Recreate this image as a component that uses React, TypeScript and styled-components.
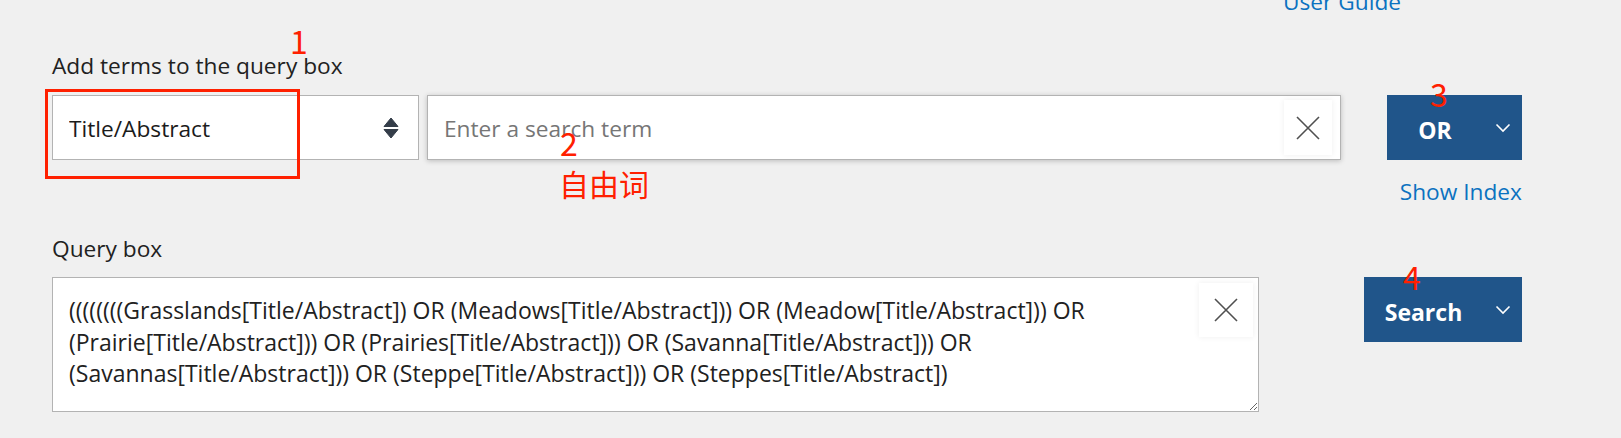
import React from 'react'
import styled, { createGlobalStyle } from 'styled-components'

const GlobalStyle = createGlobalStyle`
  html, body {
    margin: 0;
    padding: 0;
    background: #f0f0f0;
  }
  body {
    font-family: "Open Sans", "Noto Sans", sans-serif;
    color: #212121;
  }
`

const Page = styled.div`
  position: relative;
  width: 1621px;
  height: 438px;
  overflow: hidden;
  padding-left: 52px;
  box-sizing: border-box;
`

const TopBar = styled.div`
  display: flex;
  justify-content: flex-end;
  width: 1349px;
  height: 24px;
  margin-top: -10px;
`

const Link = styled.a`
  font-size: 22.7px;
  line-height: 24px;
  color: #0b72c0;
  text-decoration: none;
  cursor: pointer;
`

const Section = styled.section`
  display: flex;
  flex-direction: column;
  width: 1470px;
`

const Label = styled.label<{ $top: number }>`
  display: block;
  margin-top: ${p => p.$top}px;
  font-size: 22.7px;
  line-height: 26px;
  color: #212121;
`

const Row = styled.div<{ $gap: number; $top: number }>`
  display: flex;
  align-items: flex-start;
  gap: ${p => p.$gap}px;
  margin-top: ${p => p.$top}px;
`

const SelectWrap = styled.div`
  position: relative;
  width: 367px;
  height: 65px;
  flex: none;
`

const Select = styled.select`
  appearance: none;
  width: 100%;
  height: 100%;
  box-sizing: border-box;
  border: 1px solid #b3b3b3;
  border-radius: 0;
  background: #fff;
  padding: 2px 50px 0 16px;
  font-family: inherit;
  font-size: 22.7px;
  color: #1b1b1b;
  outline: none;
`

const SelectArrow = styled.svg`
  position: absolute;
  right: 20px;
  top: 22px;
  pointer-events: none;
`

const InputBox = styled.div`
  display: flex;
  align-items: center;
  width: 914px;
  height: 65px;
  box-sizing: border-box;
  flex: none;
  border: 1px solid #b3b3b3;
  background: #fff;
  box-shadow: 0 1px 5px rgba(0, 0, 0, 0.22);
`

const TextInput = styled.input`
  flex: 1;
  min-width: 0;
  height: 100%;
  box-sizing: border-box;
  border: none;
  outline: none;
  background: transparent;
  padding: 2px 16px 0;
  font-family: inherit;
  font-size: 22.7px;
  color: #1b1b1b;

  &::placeholder {
    color: #767676;
  }
`

const ClearButton = styled.button<{ $w: number; $h: number }>`
  display: flex;
  align-items: center;
  justify-content: center;
  width: ${p => p.$w}px;
  height: ${p => p.$h}px;
  flex: none;
  padding: 0;
  border: none;
  background: #fff;
  box-shadow: 0 0 6px rgba(0, 0, 0, 0.07);
  cursor: pointer;
`

const InputClear = styled(ClearButton)`
  margin-right: 8px;
`

const ActionButton = styled.button<{ $w: number }>`
  display: flex;
  align-items: stretch;
  width: ${p => p.$w}px;
  height: 65px;
  flex: none;
  padding: 0;
  border: none;
  background: #20558a;
  color: #fff;
  font-family: inherit;
  cursor: pointer;
`

const ButtonText = styled.span`
  flex: 1;
  display: flex;
  align-items: center;
  justify-content: center;
  font-size: 23px;
  font-weight: 700;
  padding-top: 4px;
`

const ButtonCaret = styled.span`
  width: 39px;
  display: flex;
  align-items: center;
  justify-content: center;
`

const SideColumn = styled.div`
  display: flex;
  flex-direction: column;
  align-items: flex-end;
  margin-left: auto;
`

const IndexLink = styled(Link)`
  margin-top: 19px;
  line-height: 26px;
`

const QueryWrap = styled.div`
  position: relative;
  width: 1207px;
  height: 135px;
  flex: none;
`

const QueryArea = styled.textarea`
  display: block;
  width: 100%;
  height: 100%;
  box-sizing: border-box;
  border: 1px solid #b3b3b3;
  background: #fff;
  padding: 17px 70px 8px 16px;
  font-family: inherit;
  font-size: 23px;
  line-height: 31.5px;
  color: #212121;
  resize: both;
  outline: none;
`

const QueryClear = styled(ClearButton)`
  position: absolute;
  right: 6px;
  top: 6px;
`

const Annotation = styled.span<{ $x: number; $y: number; $size: number }>`
  position: absolute;
  left: ${p => p.$x}px;
  top: ${p => p.$y}px;
  font-family: "Noto Sans CJK SC", sans-serif;
  font-size: ${p => p.$size}px;
  line-height: 1;
  color: #ff2000;
  pointer-events: none;
`

const Highlight = styled.div`
  position: absolute;
  left: 45px;
  top: 89px;
  width: 255px;
  height: 90px;
  box-sizing: border-box;
  border: 3px solid #ff2000;
  pointer-events: none;
`

const CloseIcon = () => (
  <svg width="24" height="24" viewBox="0 0 24 24">
    <path d="M1 1 L23 23 M23 1 L1 23" stroke="#505050" strokeWidth="1.6" fill="none" />
  </svg>
)

const Caret = () => (
  <svg width="16" height="10" viewBox="0 0 16 10">
    <path d="M1.5 1.5 L8 8 L14.5 1.5" stroke="#fff" strokeWidth="1.6" fill="none" />
  </svg>
)

const query =
  '((((((((Grasslands[Title/Abstract]) OR (Meadows[Title/Abstract])) OR (Meadow[Title/Abstract])) OR (Prairie[Title/Abstract])) OR (Prairies[Title/Abstract])) OR (Savanna[Title/Abstract])) OR (Savannas[Title/Abstract])) OR (Steppe[Title/Abstract])) OR (Steppes[Title/Abstract])'

export default function App() {
  const [field, setField] = React.useState('Title/Abstract')
  const [term, setTerm] = React.useState('')
  const [text, setText] = React.useState(query)

  return (
    <Page>
      <GlobalStyle />
      <TopBar>
        <Link>User Guide</Link>
      </TopBar>

      <Section>
        <Label $top={39}>Add terms to the query box</Label>
        <Row $gap={8} $top={16}>
          <SelectWrap>
            <Select value={field} onChange={e => setField(e.target.value)}>
              <option>All Fields</option>
              <option>Title/Abstract</option>
              <option>Title</option>
              <option>Author</option>
            </Select>
            <SelectArrow width="16" height="22" viewBox="0 0 16 22">
              <path d="M8 1 L15 9.5 L1 9.5 Z" fill="#343d49" stroke="#343d49" strokeLinejoin="round" />
              <path d="M8 21 L15 12.5 L1 12.5 Z" fill="#343d49" stroke="#343d49" strokeLinejoin="round" />
            </SelectArrow>
          </SelectWrap>
          <InputBox>
            <TextInput
              placeholder="Enter a search term"
              value={term}
              onChange={e => setTerm(e.target.value)}
            />
            <InputClear $w={48} $h={55} onClick={() => setTerm('')}>
              <CloseIcon />
            </InputClear>
          </InputBox>
          <SideColumn>
            <ActionButton $w={135}>
              <ButtonText>OR</ButtonText>
              <ButtonCaret>
                <Caret />
              </ButtonCaret>
            </ActionButton>
            <IndexLink>Show Index</IndexLink>
          </SideColumn>
        </Row>

        <Label $top={31}>Query box</Label>
        <Row $gap={105} $top={15}>
          <QueryWrap>
            <QueryArea value={text} onChange={e => setText(e.target.value)} />
            <QueryClear $w={54} $h={54} onClick={() => setText('')}>
              <CloseIcon />
            </QueryClear>
          </QueryWrap>
          <ActionButton $w={158}>
            <ButtonText>Search</ButtonText>
            <ButtonCaret>
              <Caret />
            </ButtonCaret>
          </ActionButton>
        </Row>
      </Section>

      <Highlight />
      <Annotation $x={290} $y={24} $size={32}>1</Annotation>
      <Annotation $x={560} $y={126} $size={32}>2</Annotation>
      <Annotation $x={559} $y={168} $size={30}>自由词</Annotation>
      <Annotation $x={1430} $y={77} $size={32}>3</Annotation>
      <Annotation $x={1403} $y={260} $size={32}>4</Annotation>
    </Page>
  )
}
